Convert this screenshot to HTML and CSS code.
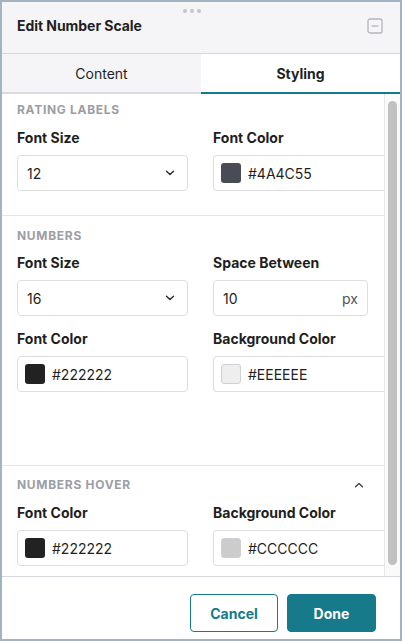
FILE: index.html
```html
<!DOCTYPE html>
<html>
<head>
<meta charset="utf-8">
<link rel="stylesheet" href="styles.css">
</head>
<body>
<div class="panel">
  <div class="header">
    <div class="drag"><span></span><span></span><span></span></div>
    <div class="title">Edit Number Scale</div>
    <svg class="minimize" width="16" height="16" viewBox="0 0 16 16"><rect x="1" y="1" width="14" height="14" rx="2" fill="none" stroke="#b3b5bc" stroke-width="1.3"/><line x1="4.5" y1="8" x2="11.5" y2="8" stroke="#b3b5bc" stroke-width="1.3"/></svg>
  </div>
  <div class="tabs">
    <div class="tab">Content</div>
    <div class="tab active">Styling</div>
  </div>
  <div class="body">
    <div class="scroll">
      <div class="inner">
        <section class="sec first">
          <div class="sec-title">RATING LABELS</div>
          <div class="grid">
            <div class="field">
              <div class="label">Font Size</div>
              <div class="input select">12<svg class="caret" width="10" height="6" viewBox="0 0 10 6"><path d="M1.5 1.2 L5 4.6 L8.5 1.2" fill="none" stroke="#2a2a2a" stroke-width="1.4" stroke-linecap="round" stroke-linejoin="round"/></svg></div>
            </div>
            <div class="field">
              <div class="label">Font Color</div>
              <div class="input color open"><span class="swatch" style="background:#4A4C55"></span>#4A4C55</div>
            </div>
          </div>
        </section>
        <section class="sec second">
          <div class="sec-title">NUMBERS</div>
          <div class="grid">
            <div class="field">
              <div class="label">Font Size</div>
              <div class="input select">16<svg class="caret" width="10" height="6" viewBox="0 0 10 6"><path d="M1.5 1.2 L5 4.6 L8.5 1.2" fill="none" stroke="#2a2a2a" stroke-width="1.4" stroke-linecap="round" stroke-linejoin="round"/></svg></div>
            </div>
            <div class="field">
              <div class="label">Space Between</div>
              <div class="input unit">10<span class="px">px</span></div>
            </div>
            <div class="field">
              <div class="label">Font Color</div>
              <div class="input color"><span class="swatch" style="background:#222222"></span>#222222</div>
            </div>
            <div class="field">
              <div class="label">Background Color</div>
              <div class="input color open"><span class="swatch light" style="background:#EEEEEE"></span>#EEEEEE</div>
            </div>
          </div>
        </section>
        <section class="sec third">
          <div class="sec-head">
            <div class="sec-title">NUMBERS HOVER</div>
            <svg class="up" width="10" height="6" viewBox="0 0 10 6"><path d="M1.5 4.8 L5 1.4 L8.5 4.8" fill="none" stroke="#444" stroke-width="1.4" stroke-linecap="round" stroke-linejoin="round"/></svg>
          </div>
          <div class="grid">
            <div class="field">
              <div class="label">Font Color</div>
              <div class="input color"><span class="swatch" style="background:#222222"></span>#222222</div>
            </div>
            <div class="field">
              <div class="label">Background Color</div>
              <div class="input color open"><span class="swatch light" style="background:#CCCCCC"></span>#CCCCCC</div>
            </div>
          </div>
        </section>
      </div>
    </div>
    <div class="track"><div class="thumb"></div></div>
  </div>
  <div class="footer">
    <button class="btn cancel">Cancel</button>
    <button class="btn done">Done</button>
  </div>
</div>
</body>
</html>
```
FILE: styles.css
```css
* { box-sizing: border-box; }
html, body { margin: 0; padding: 0; }
body {
  font-family: Inter, "Noto Sans", sans-serif;
  color: #1f1f22;
  background: #fff;
}
.panel {
  width: 402px;
  height: 641px;
  border: 2px solid #a5b3c0;
  display: flex;
  flex-direction: column;
  overflow: hidden;
}
.header {
  position: relative;
  height: 52px;
  flex: none;
  background: #f5f5f8;
  border-bottom: 1px solid #d3d6dc;
  display: flex;
  align-items: center;
  justify-content: space-between;
  padding: 0 17px 4px 15px;
}
.drag {
  position: absolute;
  top: 7px;
  left: 181px;
  display: flex;
  gap: 3px;
}
.drag span {
  width: 4px;
  height: 4px;
  border-radius: 50%;
  background: #c3c5cb;
}
.title {
  font-size: 14px;
  font-weight: 700;
  letter-spacing: -0.05px;
}
.minimize { display: block; }
.tabs {
  display: flex;
  height: 40px;
  flex: none;
}
.tab {
  flex: 1;
  display: flex;
  align-items: center;
  justify-content: center;
  font-size: 14px;
  background: #f5f5f8;
  border-bottom: 2px solid #d9dbe0;
  padding-top: 1px;
}
.tab.active {
  background: #fff;
  font-weight: 700;
  border-bottom-color: #167a8a;
}
.body {
  flex: 1;
  display: flex;
  min-height: 0;
  border-bottom: 1px solid #d5d8de;
}
.scroll {
  flex: 1;
  overflow: hidden;
}
.inner { width: 398px; }
.sec {
  padding: 12px 0 0 15px;
  border-bottom: 1px solid #e3e5e9;
}
.sec.first { padding-top: 8px; padding-bottom: 24px; }
.sec.second { padding-top: 12px; padding-bottom: 73px; }
.sec.third { padding-top: 11px; padding-bottom: 12px; border-bottom: none; }
.sec-head {
  display: flex;
  align-items: center;
  justify-content: space-between;
  width: 347px;
}
.sec-title {
  font-size: 12px;
  line-height: 16px;
  font-weight: 700;
  letter-spacing: 0.7px;
  color: #9c9ea6;
}
.up { display: block; }
.grid {
  display: grid;
  grid-template-columns: 171px 171px;
  column-gap: 25px;
  row-gap: 13px;
  margin-top: 10px;
}
.second .grid { margin-top: 9px; }
.label {
  font-size: 14px;
  font-weight: 700;
  line-height: 20px;
  margin-bottom: 7px;
}
.input {
  height: 36px;
  border: 1px solid #dcdee2;
  border-radius: 4px;
  display: flex;
  align-items: center;
  padding: 0 9px;
  font-size: 14px;
  color: #1f1f22;
}
.select { justify-content: space-between; padding-right: 12px; }
.caret { display: block; }
.unit { width: 155px; justify-content: space-between; padding-right: 9px; }
.px { color: #505258; }
.color { padding-left: 7px; }
.color.open { border-right: none; border-radius: 4px 0 0 4px; }
.swatch {
  width: 20px;
  height: 20px;
  border-radius: 3px;
  margin-right: 7px;
  flex: none;
}
.swatch.light { border: 1px solid #cfd0d4; }
.track {
  width: 16px;
  flex: none;
  background: #fafafa;
  border-left: 1px solid #e6e7ea;
  padding: 7px 0 0 3px;
}
.thumb {
  width: 9px;
  height: 464px;
  border-radius: 5px;
  background: #c1c1c1;
}
.footer {
  height: 62px;
  flex: none;
  display: flex;
  justify-content: flex-end;
  align-items: flex-start;
  gap: 9px;
  padding: 17px 24px 0 0;
}
.btn {
  font-family: Inter, "Noto Sans", sans-serif;
  height: 38px;
  border-radius: 4px;
  font-size: 14px;
  font-weight: 700;
  cursor: pointer;
}
.cancel {
  width: 88px;
  background: #fff;
  color: #167a8a;
  border: 1px solid #167a8a;
}
.done {
  width: 89px;
  background: #167a8a;
  color: #fff;
  border: 1px solid #167a8a;
}
```
